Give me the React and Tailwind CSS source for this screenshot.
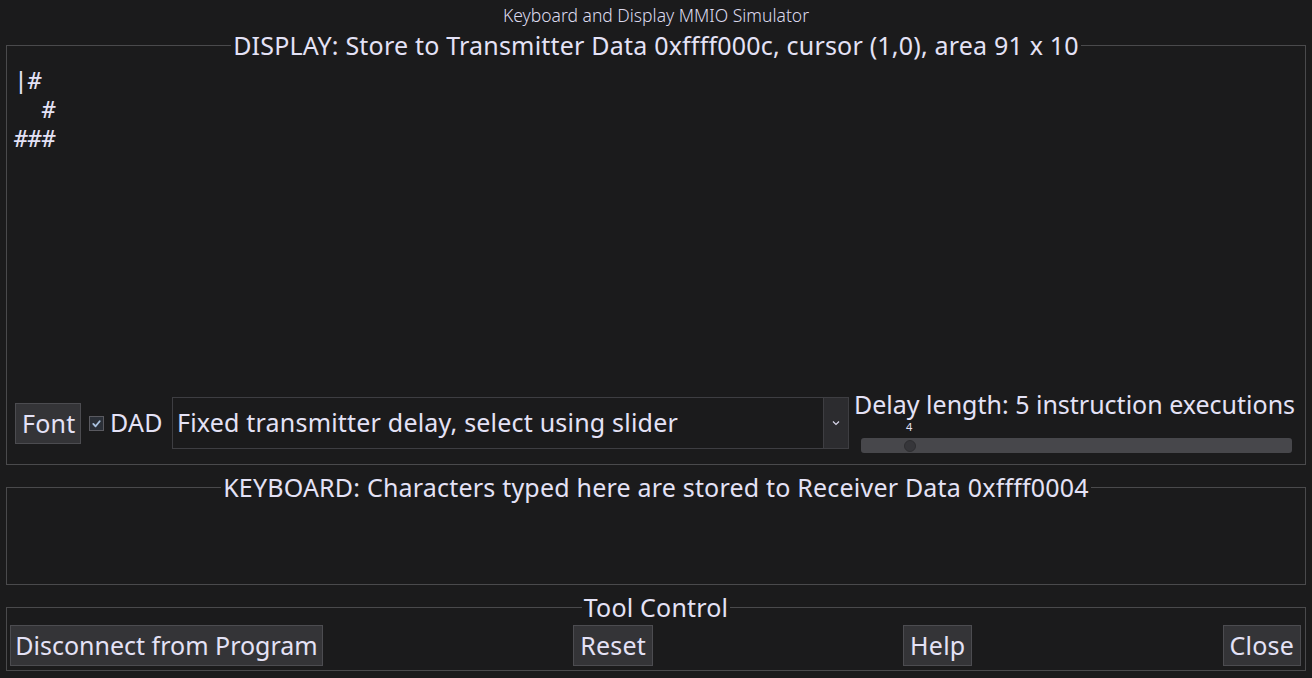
import React from "react";

const FONT = { fontFamily: '"Noto Sans", "Open Sans", sans-serif' };

const ToolButton = ({ children, className = "" }) => (
    <button
        className={`h-[41px] bg-[#343437] border border-[#4c4c50] text-[25px] leading-none text-[#e4e2f6] whitespace-nowrap ${className}`}
    >
        {children}
    </button>
);

const Panel = ({ title, children, className = "" }) => (
    <fieldset className={`border border-[#4a4a4c] ${className}`}>
        <legend className="mx-auto px-[2px] text-[25px] tracking-[0.2px] leading-[28px] text-[#e4e2f6]">
            {title}
        </legend>
        {children}
    </fieldset>
);

const App = () => {
    const lines = ["|#", "  #", "###"];

    return (
        <div
            className="w-[1312px] h-[678px] bg-[#1b1b1c] text-[#e4e2f6] px-[6px] overflow-hidden"
            style={FONT}
        >
            <div className="h-[31px] flex items-center justify-center text-[17.5px] font-light text-[#dcdaee]">
                Keyboard and Display MMIO Simulator
            </div>

            <Panel
                title="DISPLAY: Store to Transmitter Data 0xffff000c, cursor (1,0), area 91 x 10"
                className="w-[1300px]"
            >
                <div
                    className="h-[338px] pt-[8px] pl-[7px] text-[23px] leading-[29px] whitespace-pre"
                    style={{ fontFamily: '"DejaVu Sans Mono", "Liberation Mono", monospace' }}
                >
                    {lines.map((l, i) => (
                        <div key={i}>{l}</div>
                    ))}
                </div>

                <div className="flex items-center h-[52px] pl-[8px] pr-[6px] mb-[15px]">
                    <ToolButton className="w-[66px] px-[6px] tracking-[0.2px]">Font</ToolButton>

                    <div className="ml-[8px] w-[15px] h-[15px] border border-[#5a5a60] bg-[#2b3038] flex items-center justify-center">
                        <svg width="11" height="11" viewBox="0 0 12 12">
                            <path
                                d="M2.5 6.5 L5 9 L9.5 3.5"
                                fill="none"
                                stroke="#a9c2e0"
                                strokeWidth="2"
                                strokeLinecap="round"
                                strokeLinejoin="round"
                            />
                        </svg>
                    </div>
                    <span className="ml-[6px] w-[56px] text-[25px] tracking-[0.2px]">DAD</span>

                    <div className="ml-[6px] w-[677px] h-[52px] border border-[#3e3e42] flex items-stretch">
                        <div className="flex-1 flex items-center pl-[4px] text-[25px] tracking-[0.2px]">
                            Fixed transmitter delay, select using slider
                        </div>
                        <div className="w-[25px] bg-[#2c2c2f] border-l border-[#3e3e42] flex items-center justify-center">
                            <svg width="8" height="6" viewBox="0 0 8 6">
                                <path d="M1 1.5 L4 4.5 L7 1.5" fill="none" stroke="#d8d6ea" strokeWidth="1.2" />
                            </svg>
                        </div>
                    </div>

                    <div className="ml-[5px] self-start -mt-[6px] flex-1 min-w-0 flex flex-col">
                        <div className="text-[25px] leading-[26px] whitespace-nowrap">
                            Delay length: 5 instruction executions
                        </div>
                        <div className="pl-[7px] pr-[7px]">
                            <div className="mt-[4px] h-[12px] text-[11px] leading-[12px]">
                                <span className="ml-[45px]">4</span>
                            </div>
                            <div className="mt-[5px] h-[15px] rounded-[3px] bg-[#47474b] flex items-center">
                                <div className="ml-[43px] w-[12px] h-[12px] rounded-full bg-[#36363a] border border-[#2e2e31]" />
                            </div>
                        </div>
                    </div>
                </div>
            </Panel>

            <Panel
                title="KEYBOARD: Characters typed here are stored to Receiver Data 0xffff0004"
                className="w-[1300px] mt-[8px]"
            >
                <div className="h-[83px]" />
            </Panel>

            <Panel title="Tool Control" className="w-[1300px] mt-[8px]">
                <div className="flex justify-between items-center pt-[4px] pl-[3px] pr-[4px] pb-[4px]">
                    <ToolButton className="w-[313px] px-[4px]">Disconnect from Program</ToolButton>
                    <ToolButton className="px-[6px] tracking-[0.2px]">Reset</ToolButton>
                    <ToolButton className="px-[6px] tracking-[0.2px]">Help</ToolButton>
                    <ToolButton className="px-[6px] tracking-[0.2px]">Close</ToolButton>
                </div>
            </Panel>
        </div>
    );
};

export default App;
